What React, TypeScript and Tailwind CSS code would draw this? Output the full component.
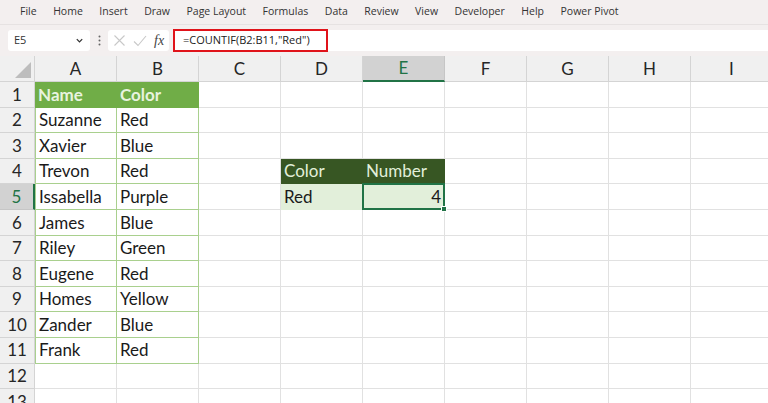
import React from "react";

const menu = [
  "File",
  "Home",
  "Insert",
  "Draw",
  "Page Layout",
  "Formulas",
  "Data",
  "Review",
  "View",
  "Developer",
  "Help",
  "Power Pivot",
];

const cols = ["A", "B", "C", "D", "E", "F", "G", "H", "I"];

const people: [string, string][] = [
  ["Suzanne", "Red"],
  ["Xavier", "Blue"],
  ["Trevon", "Red"],
  ["Issabella", "Purple"],
  ["James", "Blue"],
  ["Riley", "Green"],
  ["Eugene", "Red"],
  ["Homes", "Yellow"],
  ["Zander", "Blue"],
  ["Frank", "Red"],
];

const cellFont = { fontFamily: "Lato, 'Open Sans', sans-serif" };

function Cell({ r, c }: { r: number; c: number }) {
  // table A1:B11
  if (r === 1 && c < 2) {
    return (
      <div className="flex h-full items-center border-r border-b border-[#70ad47] bg-[#70ad47] px-[3px] text-[17px] font-bold text-[#e8f3df]">
        {c === 0 ? "Name" : "Color"}
      </div>
    );
  }
  if (r >= 2 && r <= 11 && c < 2) {
    return (
      <div
        className={`flex h-full items-center border-b border-[#a9d08e] px-[3px] text-[17px] text-[#1a1a1a] ${
          c === 1 ? "border-r" : "border-r border-r-[#a9d08e]"
        } ${c === 0 ? "border-l border-l-[#a9d08e]" : ""}`}
      >
        {people[r - 2][c]}
      </div>
    );
  }
  if (r === 4 && (c === 3 || c === 4)) {
    return (
      <div className="flex h-full items-center border-r border-b border-[#375623] bg-[#375623] px-[3px] text-[17px] text-[#e2efda]">
        {c === 3 ? "Color" : "Number"}
      </div>
    );
  }
  if (r === 5 && c === 3) {
    return (
      <div className="flex h-full items-center border-r border-b border-[#e2efda] bg-[#e2efda] px-[3px] text-[17px] text-[#1a1a1a]">
        Red
      </div>
    );
  }
  if (r === 5 && c === 4) {
    return (
      <div className="relative -mt-px -ml-px flex h-[calc(100%+1px)] w-[calc(100%+1px)] items-center justify-end border-2 border-[#217346] bg-[#e2efda] px-[2px] text-[17px] text-[#1a1a1a]">
        4
        <div className="absolute -right-[4px] -bottom-[4px] h-[6px] w-[6px] border border-white bg-[#217346]" />
      </div>
    );
  }
  return <div className="h-full border-r border-b border-[#e1e1e1]" />;
}

export default function App() {
  const rows = Array.from({ length: 13 }, (_, i) => i + 1);

  return (
    <div className="h-[403px] w-[768px] overflow-hidden bg-white" style={{ fontFamily: "'Open Sans', 'Noto Sans', sans-serif" }}>
      {/* menu */}
      <div className="flex h-[24px] items-center gap-[16.5px] bg-[#f3efef] pl-[20px] text-[10.5px] text-[#333]">
        {menu.map((m) => (
          <span key={m}>{m}</span>
        ))}
      </div>

      {/* formula bar */}
      <div className="flex h-[32px] items-center bg-[#f3efef] pt-[4px] pb-[4px] pl-[8px] border-t border-[#e6e2e2]">
        <div className="flex h-[21px] w-[82px] items-center justify-between rounded-[3px] bg-white pr-[6px] pl-[6px] text-[11px] text-[#333]">
          <span>E5</span>
          <svg width="9" height="9" viewBox="0 0 10 10">
            <path d="M2 3.5 L5 6.5 L8 3.5" stroke="#333" strokeWidth="1.4" fill="none" />
          </svg>
        </div>
        <div className="flex w-[18px] justify-center">
          <svg width="3" height="11" viewBox="0 0 3 11">
            <circle cx="1.5" cy="1.5" r="1" fill="#666" />
            <circle cx="1.5" cy="5.5" r="1" fill="#666" />
            <circle cx="1.5" cy="9.5" r="1" fill="#666" />
          </svg>
        </div>
        <div className="flex h-[21px] w-[61px] items-center gap-[7px] rounded-[3px] bg-white pl-[5px]">
          <svg width="13" height="13" viewBox="0 0 13 13">
            <path d="M1.5 1.5 L11.5 11.5 M11.5 1.5 L1.5 11.5" stroke="#c8c8c8" strokeWidth="1.1" />
          </svg>
          <svg width="14" height="12" viewBox="0 0 14 12">
            <path d="M1 6.5 L5 10.5 L13 1" stroke="#c8c8c8" strokeWidth="1.1" fill="none" />
          </svg>
          <span className="text-[14px] italic text-[#444]" style={{ fontFamily: "'Liberation Serif', serif" }}>
            fx
          </span>
        </div>
        <div className="ml-[4px] flex h-[21px] flex-1 items-center rounded-l-[3px] bg-white">
          <div className="flex h-[23px] w-[155px] items-center border-2 border-[#e0131a] pl-[8px] text-[11px] text-[#222]">
            =COUNTIF(B2:B11,"Red")
          </div>
        </div>
      </div>

      {/* grid */}
      <div className="grid grid-cols-[35px_repeat(9,82px)] grid-rows-[26px_repeat(13,25.6px)] bg-white" style={cellFont}>
        {/* corner */}
        <div className="relative border-r border-b border-[#d4d4d4] bg-[#f0f0f0]">
          <svg className="absolute right-[3px] bottom-[3px]" width="16" height="16" viewBox="0 0 16 16">
            <path d="M16 0 L16 16 L0 16 Z" fill="#bdbdbd" />
          </svg>
        </div>
        {cols.map((c) => (
          <div
            key={c}
            className={`flex items-center justify-center border-r text-[17px] ${
              c === "E"
                ? "border-b-2 border-r-[#c6c6c6] border-b-[#217346] bg-[#d2d2d2] text-[#217346]"
                : "border-b border-r-[#d4d4d4] border-b-[#d4d4d4] bg-[#f0f0f0] text-[#262626]"
            }`}
          >
            {c}
          </div>
        ))}
        {rows.map((r) => (
          <React.Fragment key={r}>
            <div
              className={`flex items-center justify-center border-b text-[17px] ${
                r === 5
                  ? "border-r-2 border-r-[#217346] border-b-[#c6c6c6] bg-[#d2d2d2] text-[#217346]"
                  : "border-r border-[#d4d4d4] bg-[#f0f0f0] text-[#262626]"
              }`}
            >
              {r}
            </div>
            {cols.map((_, ci) => (
              <Cell key={ci} r={r} c={ci} />
            ))}
          </React.Fragment>
        ))}
      </div>
    </div>
  );
}
